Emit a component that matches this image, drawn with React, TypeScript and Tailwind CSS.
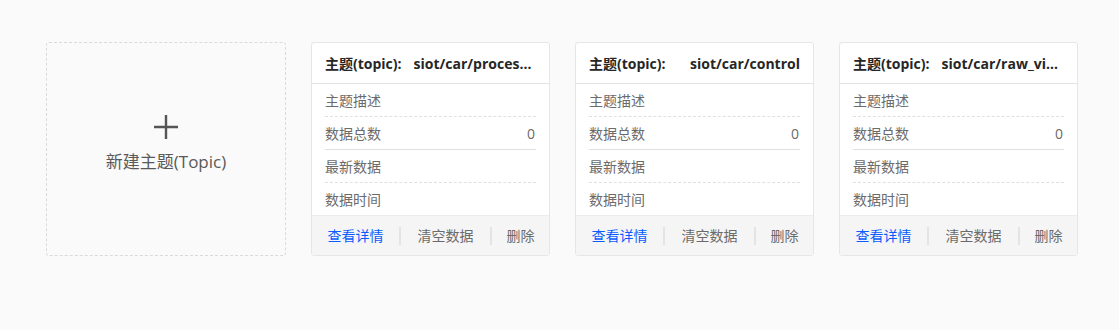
import React from 'react';

const font = { fontFamily: '"Open Sans", "Noto Sans CJK SC", sans-serif' };

const topics = [
    { name: 'siot/car/process_result', count: 0 },
    { name: 'siot/car/control', count: 0 },
    { name: 'siot/car/raw_video_frame', count: 0 },
];

function TopicCard({ name, count }: { name: string; count: number }) {
    return (
        <div className="w-[239px] h-[214px] flex flex-col bg-white border border-[#e6e6e6] rounded-[3px] overflow-hidden">
            {/* header */}
            <div className="h-[41px] shrink-0 flex items-center px-[13px] border-b border-[#e3e3e3] text-[14px] font-bold text-[#262626]">
                <span className="shrink-0">主题(topic):</span>
                <span className="flex-1 min-w-0 ml-3 truncate text-right">{name}</span>
            </div>

            {/* rows */}
            <div className="flex-1 flex flex-col px-[13px] text-[14px] text-[#6b6b6b]">
                <div className="h-[33px] flex items-center border-b border-dashed border-[#e0e0e0]">主题描述</div>
                <div className="h-[33px] flex items-center justify-between border-b border-[#e0e0e0]">
                    <span>数据总数</span>
                    <span className="pr-px">{count}</span>
                </div>
                <div className="h-[33px] flex items-center border-b border-dashed border-[#e0e0e0]">最新数据</div>
                <div className="h-[32px] flex items-center">数据时间</div>
            </div>

            {/* actions */}
            <div className="h-[40px] shrink-0 flex items-center bg-[#f5f5f5] border-t border-[#ececec] text-[14px]">
                <button className="w-[87px] text-[#0a5cff]">查看详情</button>
                <div className="w-[2px] h-[18px] bg-[#e4e4e4]" />
                <button className="w-[89px] text-[#6b6b6b]">清空数据</button>
                <div className="w-[2px] h-[18px] bg-[#e4e4e4]" />
                <button className="flex-1 text-[#6b6b6b]">删除</button>
            </div>
        </div>
    );
}

export default function App() {
    return (
        <div className="w-[1119px] h-[330px] bg-[#fafafa] pt-[42px] pl-[46px]" style={font}>
            <div className="flex gap-[25px]">
                {/* add topic */}
                <div className="w-[240px] h-[214px] flex flex-col items-center justify-center pb-[10px] border border-dashed border-[#dadada] rounded-[3px] text-[#595959]">
                    <svg width="26" height="26" viewBox="0 0 26 26" className="mb-[1px]">
                        <path d="M13 1v24M1 13h24" stroke="#555" strokeWidth="2.4" />
                    </svg>
                    <span className="mt-[8px] text-[17px]">新建主题(Topic)</span>
                </div>

                {topics.map((t) => (
                    <TopicCard key={t.name} name={t.name} count={t.count} />
                ))}
            </div>
        </div>
    );
}
